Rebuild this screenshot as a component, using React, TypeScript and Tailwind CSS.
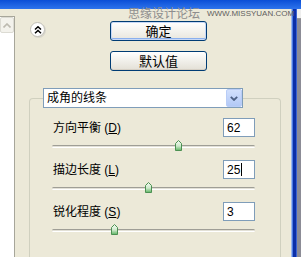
import React from "react";

const rows = [
  { label: "方向平衡", key: "D", value: "62", thumb: 126, caret: false },
  { label: "描边长度", key: "L", value: "25", thumb: 96, caret: true },
  { label: "锐化程度", key: "S", value: "3", thumb: 62, caret: false },
];

// XP 风格的小滑块
const Thumb = () => (
  <svg width="7" height="11" viewBox="0 0 7 11">
    <defs>
      <linearGradient id="tg" x1="0" y1="0" x2="0" y2="1">
        <stop offset="0" stopColor="#F4FAF2" />
        <stop offset="0.55" stopColor="#CFE9CC" />
        <stop offset="1" stopColor="#5DB462" />
      </linearGradient>
    </defs>
    <path d="M3.5 0.5 L6.5 3.5 L6.5 10.5 L0.5 10.5 L0.5 3.5 Z" fill="url(#tg)" stroke="#4C9152" strokeWidth="1" />
  </svg>
);

const App = () => {
  return (
    <div className="relative w-[301px] h-[257px] overflow-hidden bg-[#ECE9D8] flex flex-col font-['Liberation_Sans','Noto_Sans_CJK_SC',sans-serif] text-black">
      {/* 标题栏底边 */}
      <div className="h-[9px] shrink-0 bg-linear-to-b from-[#0A4ED6] to-[#2D73EC]"></div>

      <div className="flex flex-1 min-h-0">
        {/* 左侧列表 */}
        <div className="w-[15px] flex flex-col">
          <div className="h-[7px] shrink-0"></div>
          <div className="flex-1 bg-white border-t border-r border-[#A7A69A]">
            <div className="w-[14px] h-[16px] bg-[#F3F2EC] border border-[#DCDBD3] rounded-[2px] flex items-center justify-center">
              <svg width="8" height="5" viewBox="0 0 8 5">
                <path d="M0.5 4.5 L4 1 L7.5 4.5" fill="none" stroke="#BDBAB0" strokeWidth="1.6" />
              </svg>
            </div>
          </div>
        </div>

        {/* 主面板 */}
        <div className="w-[276px] flex flex-col">
          <div className="h-[79px] shrink-0 flex items-start">
            <div className="ml-[15px] mt-[13px] w-[15px] h-[15px] rounded-full bg-white border border-[#C2C0B8] shadow-[1px_1px_0_#D8D6CC] flex items-center justify-center">
              <svg width="8" height="8" viewBox="0 0 8 8">
                <path d="M1 3.5 L4 0.8 L7 3.5 M1 7.2 L4 4.5 L7 7.2" fill="none" stroke="#000" strokeWidth="1.5" />
              </svg>
            </div>
            <div className="ml-[65px] mt-[12px] flex flex-col gap-[10px]">
              <div className="w-[97px] h-[20px] rounded-[3px] border border-[#003C74] bg-linear-to-b from-[#FFFFFF] to-[#E8E6DD] shadow-[inset_0_0_0_1px_#C7D8F6,inset_0_-2px_0_0_#8BB0EE] flex items-center justify-center text-[13px] leading-none">
                确定
              </div>
              <div className="w-[97px] h-[20px] rounded-[3px] border border-[#003C74] bg-linear-to-b from-[#FFFFFF] to-[#E3E0D6] shadow-[inset_0_-1px_0_0_#D6D0C5] flex items-center justify-center text-[13px] leading-none">
                默认值
              </div>
            </div>
          </div>

          {/* 分组框 */}
          <div className="ml-[14px] mt-[10px] w-[252px] flex-1 border border-b-0 border-[#D0D0BF] rounded-t-[4px]">
            <div className="ml-[13px] -mt-[11px] w-[200px] h-[20px] bg-white border border-[#7F9DB9] flex items-center">
              <span className="flex-1 pl-[3px] text-[12px] leading-none">成角的线条</span>
              <div className="w-[16px] h-[18px] rounded-[2px] border border-[#B9CDF7] bg-linear-to-b from-[#D2E0FD] to-[#B2C8F6] flex items-center justify-center">
                <svg width="8" height="5" viewBox="0 0 8 5">
                  <path d="M0.8 0.8 L4 4 L7.2 0.8" fill="none" stroke="#4D6185" strokeWidth="1.8" />
                </svg>
              </div>
            </div>

            <div className="mt-[10px] flex flex-col">
              {rows.map((r) => (
                <div key={r.key} className="h-[42px]">
                  <div className="h-[19px] flex items-center justify-between pl-[23px] pr-[25px]">
                    <span className="text-[12px] leading-none">
                      {r.label} (<span className="underline">{r.key}</span>)
                    </span>
                    <div className="w-[32px] h-[19px] bg-white border border-[#7F9DB9] flex items-center pl-[3px] text-[12px] leading-none">
                      {r.value}
                      {r.caret && <span className="ml-[1px] w-[1px] h-[13px] bg-black"></span>}
                    </div>
                  </div>
                  <div className="relative mt-[3px] h-[12px] ml-[22px] mr-[25px]">
                    <div className="absolute left-0 right-0 top-[5px] h-[3px] rounded-[2px] border-t border-[#9F9E96] border-b border-b-white bg-[#E2E0D6]"></div>
                    <div className="absolute top-0" style={{ left: r.thumb - 3 }}>
                      <Thumb />
                    </div>
                  </div>
                </div>
              ))}
            </div>
          </div>
        </div>

        {/* 右侧窗口边框 */}
        <div className="w-[10px] flex">
          <div className="w-[1px] bg-[#9DB8EE]"></div>
          <div className="w-[1px] bg-[#4D7DE3]"></div>
          <div className="w-[3px] bg-[#0B2FA8]"></div>
          <div className="w-[1px] bg-[#3B63D3]"></div>
          <div className="w-[4px] flex flex-col">
            <div className="h-[10px] bg-[#EEEEEE] border-b border-[#9A9A9A]"></div>
            <div className="flex-1 bg-[#8C8C96]"></div>
          </div>
        </div>
      </div>

      {/* 水印 */}
      <div className="absolute left-[128px] top-[6px] flex items-end gap-[7px]">
        <span className="text-[12px] leading-[14px] text-[#8E8E8E] font-['Noto_Sans_CJK_SC',sans-serif]">思缘设计论坛</span>
        <span className="text-[8px] leading-[10px] text-[#5E5E5E] font-['Liberation_Sans',sans-serif] pb-[1px]">WWW.MISSYUAN.COM</span>
      </div>
    </div>
  );
};

export default App;
